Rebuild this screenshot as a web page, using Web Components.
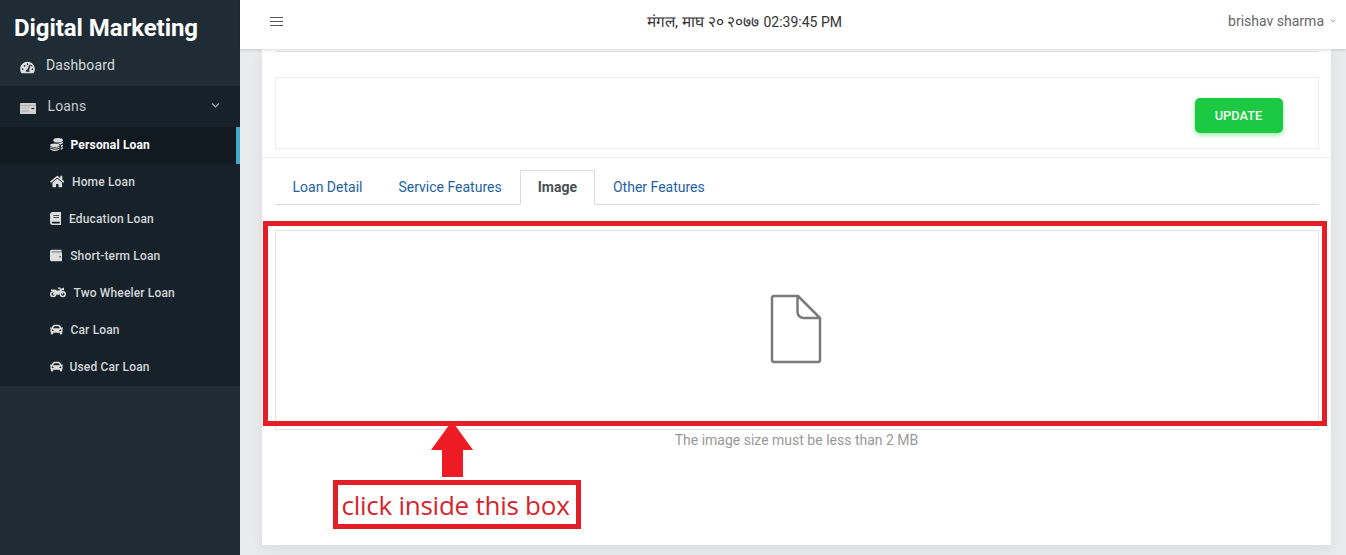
<!DOCTYPE html>
<html lang="en">
<head>
<meta charset="utf-8">
<title>Digital Marketing</title>
<style>
html,body{margin:0;height:100%;overflow:hidden}
body{font-family:Roboto,"Liberation Sans",sans-serif;font-size:14px;background:#e9eaed}
</style>
</head>
<body>
<app-shell></app-shell>
<script>
const ICONS = {
  gauge: '<svg viewBox="0 0 576 512"><path fill-rule="evenodd" d="M288 32C129 32 0 161 0 320c0 53 14 102 39 145 6 10 16 15 27 15h444c11 0 21-5 27-15 25-43 39-92 39-145C576 161 447 32 288 32zM96 352a32 32 0 1 1 0-64 32 32 0 0 1 0 64zm48-160a32 32 0 1 1 64 0 32 32 0 0 1-64 0zm113-64a32 32 0 1 1 63 0 32 32 0 0 1-63 0zm110 23c4-13 18-19 30-15 13 4 19 17 15 30l-61 184c12 12 19 28 19 46 0 12-3 23-9 32H234c-6-9-10-20-10-32 0-34 26-62 60-64zm51 41a32 32 0 1 1 50 28zm62 160a32 32 0 1 1 0-64 32 32 0 0 1 0 64z"/></svg>',
  card: '<svg viewBox="0 0 16 12" preserveAspectRatio="none"><rect width="16" height="12" rx=".8"/><path d="M0 2.6h16M1.5 8.8h7" stroke="#9a9da0" stroke-width=".7"/><path d="M1.5 5.5h8" stroke="#aaa" stroke-width=".6"/><path d="M11.5 6h2.8" stroke="#222" stroke-width="1.2"/></svg>',
  coins: '<svg viewBox="0 0 512 512"><ellipse cx="320" cy="84" rx="188" ry="84"/><path d="M508 150v36c0 31-37 56-95 69-35-33-94-54-163-60-58-10-104-28-118-50 42 28 115 42 188 42s146-10 188-37zM424 290c36-8 66-20 84-36v50c0 29-32 48-84 60zM424 396c36-8 66-20 84-36v40c0 27-32 43-84 54z"/><ellipse cx="192" cy="286" rx="188" ry="70"/><path d="M4 336c42 33 110 46 188 46s146-13 188-46v26c0 36-86 58-188 58S4 398 4 362zM4 414c42 30 110 40 188 40s146-10 188-40v22c0 42-86 74-188 74S4 476 4 436z"/></svg>',
  home: '<svg viewBox="0 0 576 512"><path d="M280.37 148.26L96 300.11V464a16 16 0 0 0 16 16l112.06-.29a16 16 0 0 0 15.92-16V368a16 16 0 0 1 16-16h64a16 16 0 0 1 16 16v95.64a16 16 0 0 0 16 16.05L464 480a16 16 0 0 0 16-16V300L295.67 148.26a12.19 12.19 0 0 0-15.3 0zM571.6 251.47L488 182.56V44.05a12 12 0 0 0-12-12h-56a12 12 0 0 0-12 12v72.61L318.47 43a48 48 0 0 0-61 0L4.34 251.47a12 12 0 0 0-1.6 16.9l25.5 31A12 12 0 0 0 45.15 301l235.22-193.74a12.19 12.19 0 0 1 15.3 0L530.9 301a12 12 0 0 0 16.9-1.6l25.5-31a12 12 0 0 0-1.7-16.93z"/></svg>',
  book: '<svg viewBox="0 0 448 512"><path fill-rule="evenodd" d="M448 360V24c0-13.300-10.700-24-24-24H96C43 0 0 43 0 96v320c0 53 43 96 96 96h328c13.300 0 24-10.700 24-24v-16c0-7.500-3.500-14.300-8.900-18.700-4.200-15.400-4.200-59.300 0-74.700 5.400-4.300 8.900-11.100 8.900-18.600zM128 128h224v32H128zM128 208h224v32H128zM381.400 448H96c-17.700 0-32-14.300-32-32 0-17.600 14.400-32 32-32h285.400c-1.900 17.100-1.900 46.900 0 64z"/></svg>',
  wallet: '<svg viewBox="0 0 512 512" preserveAspectRatio="none"><path d="M461.2 128H80c-8.84 0-16-7.16-16-16s7.16-16 16-16h384c8.84 0 16-7.16 16-16 0-26.51-21.49-48-48-48H64C28.65 32 0 60.65 0 96v320c0 35.350 28.650 64 64 64h397.200c28.020 0 50.800-21.530 50.800-48V176c0-26.470-22.780-48-50.800-48zM416 336c-17.670 0-32-14.330-32-32s14.330-32 32-32 32 14.330 32 32-14.330 32-32 32z"/><path d="M60 96h410v32H60z" opacity=".6"/></svg>',
  bike: '<svg viewBox="0 0 640 512"><g fill="none" stroke="currentColor" stroke-width="60"><circle cx="128" cy="320" r="98"/><circle cx="512" cy="320" r="98"/><path d="M512 320L390 80h-76" stroke-width="56"/></g><path d="M40 140h134c44 0 66 12 92 36h130l44-56 80-50h40v100h-96l-90 180H210l-64-20-18-52 50-50-40-30H40zM110 300h180v44H110z"/></svg>',
  car: '<svg viewBox="0 0 512 512"><path d="M499.99 176h-59.87l-16.64-41.6C406.38 91.63 365.57 64 319.5 64h-127c-46.06 0-86.88 27.63-103.99 70.4L71.87 176H12.01C4.2 176-1.53 183.34.37 190.91l6 24C7.7 220.25 12.5 224 18.01 224h20.07C24.65 235.73 16 252.78 16 272v48c0 16.12 6.16 30.67 16 41.93V416c0 17.67 14.33 32 32 32h32c17.67 0 32-14.33 32-32v-32h256v32c0 17.67 14.33 32 32 32h32c17.67 0 32-14.33 32-32v-54.07c9.84-11.25 16-25.8 16-41.93v-48c0-19.22-8.65-36.27-22.07-48H494c5.51 0 10.31-3.75 11.64-9.09l6-24c1.89-7.57-3.84-14.91-11.65-14.91zm-352.06-17.83c7.29-18.22 24.94-30.17 44.57-30.17h127c19.63 0 37.28 11.95 44.57 30.17L384 208H128l19.93-49.83zM96 319.8c-19.2 0-32-12.76-32-31.9S76.8 256 96 256s48 28.71 48 47.85-28.8 15.95-48 15.95zm320 0c-19.2 0-48 3.19-48-15.95S396.8 256 416 256s32 12.76 32 31.9-12.8 31.9-32 31.9z"/></svg>',
  chevron: '<svg viewBox="0 0 8 6"><path d="M1 1.200l3 3 3-3" fill="none" stroke="currentColor" stroke-width="1.100"/></svg>',
  menu: '<svg viewBox="0 0 13 11"><path d="M0 1.500h13M0 5.500h13M0 9.500h13" stroke="#555" stroke-width="1.100"/></svg>',
  file: '<svg viewBox="0 0 52 70"><path d="M4 2h24L50 24v42a2 2 0 0 1-2 2H4a2 2 0 0 1-2-2V4a2 2 0 0 1 2-2zM27.500 2v16a6 6 0 0 0 6 6H50" fill="none" stroke="#7b7b7b" stroke-width="2.500" stroke-linejoin="round"/></svg>',
  arrow: '<svg viewBox="0 0 42 56"><path d="M21 0L42 29H32V56H11V29H0z" fill="#ed1c24"/></svg>'
};

function define(name, render) {
  customElements.define(name, class extends HTMLElement {
    connectedCallback() {
      if (this.shadowRoot) return;
      this.attachShadow({ mode: 'open' }).innerHTML = render(this);
    }
  });
}

define('ui-icon', el => `<style>
:host{display:block;flex:none;width:${el.getAttribute('w')}px;height:${el.getAttribute('h')}px}
svg{display:block;width:100%;height:100%;fill:currentColor}
</style>${ICONS[el.getAttribute('name')]}`);

define('nav-group', el => `<style>
:host{display:flex;align-items:center;box-sizing:border-box;height:41px;padding:0 20px 2px 19.5px;color:#c5cacd;font-size:14px}
:host([dashboard]){height:37px;padding-bottom:0;color:#d5dadd}
ui-icon{margin-top:5px;margin-right:${el.getAttribute('gap')}px;color:#d0d0d0}
span{flex:1;letter-spacing:.15px}
ui-icon.c{margin:-1px 0 0;color:#aab0b5}
:host([dashboard]) span{margin-top:-5px}
:host([dashboard]) ui-icon{margin-top:0;color:#ddd}
</style><ui-icon name="${el.getAttribute('icon')}" w="${el.getAttribute('w')}" h="${el.getAttribute('h')}"></ui-icon><span><slot></slot></span>
${el.hasAttribute('open') ? '<ui-icon class="c" name="chevron" w="9" h="7"></ui-icon>' : ''}`);

define('nav-item', el => `<style>
:host{display:flex;align-items:center;box-sizing:border-box;height:37px;padding:0 0 2px 49.5px;color:#d3d6d8;font-size:12px;font-weight:500}
:host([active]){background:#111a21;color:#fff;font-weight:700;border-right:4px solid #41a5d0}
ui-icon{margin-right:${el.getAttribute('gap')}px;color:#ddd}
span{letter-spacing:${el.getAttribute('ls') || .15}px}
</style><ui-icon name="${el.getAttribute('icon')}" w="${el.getAttribute('w')}" h="${el.getAttribute('h')}"></ui-icon><span><slot></slot></span>`);

define('side-bar', () => `<style>
:host{display:block;width:240px;height:555px;background:#1f2c36;color:#fff}
h1{margin:0;height:49px;box-sizing:border-box;padding:13px 0 0 14px;font-size:24px;line-height:30px;font-weight:700;letter-spacing:-.07px;white-space:nowrap}
section{background:#17212a;height:300px}
</style>
<h1>Digital Marketing</h1>
<nav-group dashboard icon="gauge" w="15" h="13" gap="11.500">Dashboard</nav-group>
<section>
<nav-group open icon="card" w="16" h="11" gap="12">Loans</nav-group>
<nav-item active icon="coins" w="13" h="13" gap="8" ls=".18">Personal Loan</nav-item>
<nav-item icon="home" w="14.500" h="13" gap="8">Home Loan</nav-item>
<nav-item icon="book" w="11.500" h="13" gap="8">Education Loan</nav-item>
<nav-item icon="wallet" w="12.500" h="13" gap="8.200">Short-term Loan</nav-item>
<nav-item icon="bike" w="16" h="13" gap="8">Two Wheeler Loan</nav-item>
<nav-item icon="car" w="13" h="13" gap="8">Car Loan</nav-item>
<nav-item icon="car" w="13" h="13" gap="7">Used Car Loan</nav-item>
</section>`);

define('top-bar', () => `<style>
:host{display:grid;grid-template-columns:377px auto 1fr;align-items:center;box-sizing:border-box;height:49px;padding:0 10px 6px 30px;background:#fff;box-shadow:0 1px 3px rgba(0,0,0,.16);position:relative;z-index:1;color:#333}
time{display:flex;align-items:baseline;gap:4px;line-height:20px;white-space:nowrap}
.date{font-size:15.4px}
.user{display:flex;justify-content:flex-end;align-items:center;gap:6px;margin-top:-2px;color:#666}
</style>
<ui-icon name="menu" w="13" h="11"></ui-icon>
<time><span class="date">मंगल, माघ २० २०७७</span><span>02:39:45 PM</span></time>
<div class="user"><span>brishav sharma</span><ui-icon name="chevron" w="6" h="4"></ui-icon></div>`);

define('tab-item', () => `<style>
:host{display:block;box-sizing:border-box;height:35px;padding:0 17.500px 0 16.500px;line-height:33px;border:1px solid transparent;color:#1d62a3;white-space:nowrap}
:host([active]){border-color:#d9dbde #d9dbde #fff;background:#fff;color:#495057;font-weight:700}
</style><slot></slot>`);

define('tab-bar', () => `<style>
:host{display:flex;box-sizing:border-box;height:35px;border-bottom:1px solid #d9dbde}
</style><slot></slot>`);

define('update-panel', () => `<style>
:host{display:flex;justify-content:flex-end;align-items:flex-start;box-sizing:border-box;height:72px;padding:20px 35px 0 0;border:1px solid #ededf0}
button{width:88px;height:35px;padding:0 1px 0 0;border:0;border-radius:5px;background:#1cc943;color:#f4fff6;font:500 12.800px Roboto,sans-serif;box-shadow:0 2px 5px rgba(28,201,67,.45)}
</style><button>UPDATE</button>`);

define('drop-zone', () => `<style>
:host{display:flex;align-items:center;justify-content:center;box-sizing:border-box;height:200px;border:1px solid #e2e3e6;position:relative}
ui-icon{margin:0 2px 2px 0}
.mark{position:absolute;left:-13px;top:-10px;width:1064px;height:205px;box-sizing:border-box;border:5px solid #e31e27}
</style><ui-icon name="file" w="52" h="70"></ui-icon><div class="mark"></div>`);

define('callout-note', () => `<style>
:host{position:absolute;left:71px;top:372px;display:flex;flex-direction:column;width:248px}
ui-icon{margin-left:98px}
p{margin:3px 0 0;box-sizing:border-box;height:49px;border:5px solid #e31e27;padding-left:3.500px;color:#d5252d;font:26px/40px "Open Sans","Noto Sans",sans-serif;letter-spacing:-.25px;white-space:nowrap}
</style><ui-icon name="arrow" w="42" h="56"></ui-icon><p>click inside this box</p>`);

define('content-card', () => `<style>
:host{display:block;box-sizing:border-box;width:1069px;height:496px;margin-left:22px;padding-top:2px;background:#fff;box-shadow:0 4px 12px rgba(60,65,80,.09);position:relative}
hr{border:0;height:1px;margin:0;background:#e6e6e9}
.first{margin:0 13px 25px 13px}
.rule{margin-top:8px;margin-bottom:12px;background:#ededf0}
update-panel,tab-bar,drop-zone{margin-left:13px;margin-right:12px}
drop-zone{margin-top:25px}
.hint{margin:0;text-align:center;line-height:20px;color:#999}
</style>
<hr class="first">
<update-panel></update-panel>
<hr class="rule">
<tab-bar><tab-item>Loan Detail</tab-item><tab-item>Service Features</tab-item><tab-item active>Image</tab-item><tab-item>Other Features</tab-item></tab-bar>
<drop-zone></drop-zone>
<p class="hint">The image size must be less than 2 MB</p>
<callout-note></callout-note>`);

define('app-shell', () => `<style>
:host{display:grid;grid-template-columns:240px 1fr;height:555px}
main{min-width:0;background:#eaebed}
</style><side-bar></side-bar><main><top-bar></top-bar><content-card></content-card></main>`);
</script>
</body>
</html>
